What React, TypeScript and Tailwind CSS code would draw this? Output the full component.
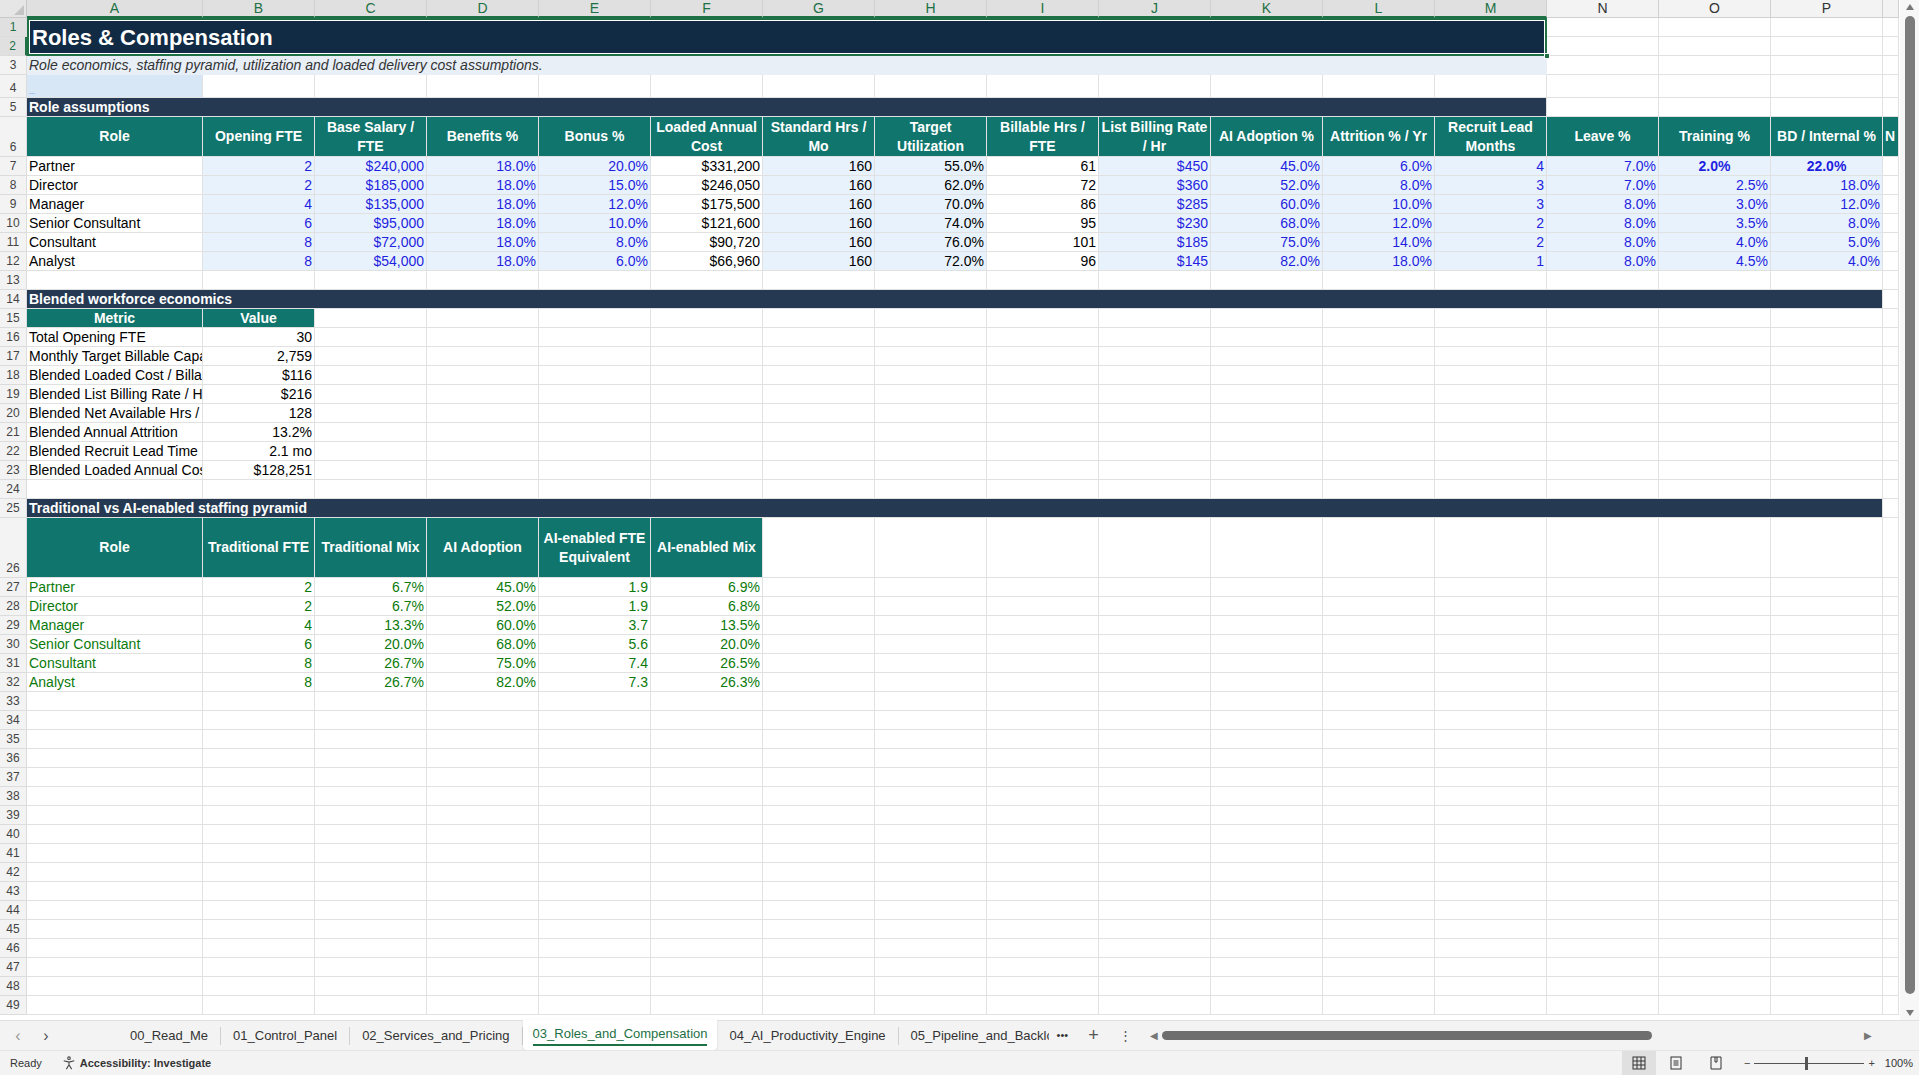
import React from "react";

const W = [176, 112, 112, 112, 112, 112, 112, 112, 112, 112, 112, 112, 112, 112, 112, 112, 16];
const LET = ["A","B","C","D","E","F","G","H","I","J","K","L","M","N","O","P",""];
const FONT = { fontFamily: '"Liberation Sans", Arial, sans-serif' };
const NARROW = { fontFamily: '"Liberation Sans", Arial, sans-serif' };

type C = { t?: React.ReactNode; cls?: string; span?: number };
const c = (t: React.ReactNode, cls = "", span = 1): C => ({ t, cls, span });

function Row({ n, h = 19, cells = [], green = false }: { n: number; h?: number; cells?: C[]; green?: boolean }) {
  const out: React.ReactNode[] = [];
  let col = 0;
  cells.forEach((cell, i) => {
    const span = cell.span || 1;
    let w = 0;
    for (let k = 0; k < span; k++) w += W[col + k];
    col += span;
    out.push(
      <div key={i} style={{ width: w }}
        className={`shrink-0 overflow-hidden whitespace-nowrap border-r border-b border-[#e1e1e1] px-[2px] flex items-end pb-[1px] text-[14px] leading-[16px] ${cell.cls}`}>
        {cell.t}
      </div>
    );
  });
  while (col < W.length) {
    out.push(<div key={"e" + col} style={{ width: W[col] }} className="shrink-0 border-r border-b border-[#e1e1e1]" />);
    col++;
  }
  return (
    <div className="flex" style={{ height: h }}>
      <div className={`w-[27px] shrink-0 bg-[#f3f3f3] border-r border-b border-[#dcdcdc] flex items-end justify-center text-[12px] leading-[17px] ${green ? "text-[#1e7145]" : "text-[#444]"}`}>{n}</div>
      {out}
    </div>
  );
}

const SECT = "bg-[#253a52] text-white font-bold text-[13px] border-[#253a52]";
const TEAL = "bg-[#10766d] text-white font-bold !justify-center text-center !whitespace-normal !items-center border-[#10766d] !leading-[19px] !pb-0";
const IN = "bg-[#e8f2fc] text-[#1f1fe0] justify-end";
const INB = "bg-[#e8f2fc] text-black justify-end";
const BLK = "justify-end text-black";
const GR = "text-[#0b7a0b]";
const GRR = "text-[#0b7a0b] justify-end";

const roles = [
  ["Partner", "2", "$240,000", "18.0%", "20.0%", "$331,200", "160", "55.0%", "61", "$450", "45.0%", "6.0%", "4", "7.0%", "2.0%", "22.0%"],
  ["Director", "2", "$185,000", "18.0%", "15.0%", "$246,050", "160", "62.0%", "72", "$360", "52.0%", "8.0%", "3", "7.0%", "2.5%", "18.0%"],
  ["Manager", "4", "$135,000", "18.0%", "12.0%", "$175,500", "160", "70.0%", "86", "$285", "60.0%", "10.0%", "3", "8.0%", "3.0%", "12.0%"],
  ["Senior Consultant", "6", "$95,000", "18.0%", "10.0%", "$121,600", "160", "74.0%", "95", "$230", "68.0%", "12.0%", "2", "8.0%", "3.5%", "8.0%"],
  ["Consultant", "8", "$72,000", "18.0%", "8.0%", "$90,720", "160", "76.0%", "101", "$185", "75.0%", "14.0%", "2", "8.0%", "4.0%", "5.0%"],
  ["Analyst", "8", "$54,000", "18.0%", "6.0%", "$66,960", "160", "72.0%", "96", "$145", "82.0%", "18.0%", "1", "8.0%", "4.5%", "4.0%"],
];
const blended = [
  ["Total Opening FTE", "30"], ["Monthly Target Billable Capacity", "2,759"], ["Blended Loaded Cost / Billable Hr", "$116"],
  ["Blended List Billing Rate / Hr", "$216"], ["Blended Net Available Hrs / FTE", "128"], ["Blended Annual Attrition", "13.2%"],
  ["Blended Recruit Lead Time", "2.1 mo"], ["Blended Loaded Annual Cost / FTE", "$128,251"],
];
const pyr = [
  ["Partner", "2", "6.7%", "45.0%", "1.9", "6.9%"], ["Director", "2", "6.7%", "52.0%", "1.9", "6.8%"],
  ["Manager", "4", "13.3%", "60.0%", "3.7", "13.5%"], ["Senior Consultant", "6", "20.0%", "68.0%", "5.6", "20.0%"],
  ["Consultant", "8", "26.7%", "75.0%", "7.4", "26.5%"], ["Analyst", "8", "26.7%", "82.0%", "7.3", "26.3%"],
];

export default function App() {
  const heads = ["Role", "Opening FTE", "Base Salary / FTE", "Benefits %", "Bonus %", "Loaded Annual Cost", "Standard Hrs / Mo", "Target Utilization", "Billable Hrs / FTE", "List Billing Rate / Hr", "AI Adoption %", "Attrition % / Yr", "Recruit Lead Months", "Leave %", "Training %", "BD / Internal %", "N"];
  const empty = Array.from({ length: 17 }, (_, i) => 33 + i);
  return (
    <div style={FONT} className="w-[1919px] h-[1075px] overflow-hidden bg-white flex flex-col">
      <div className="flex flex-1 min-h-0">
        <div className="flex-1 flex flex-col min-w-0 overflow-hidden">
          <div className="flex h-[18px] shrink-0">
            <div className="w-[27px] shrink-0 bg-[#e6e6e6] border-r border-b border-[#c8c8c8] relative">
              <div className="absolute right-[2px] bottom-[2px] w-0 h-0 border-l-[10px] border-l-transparent border-b-[10px] border-b-[#c4c4c4]" />
            </div>
            {W.map((w, i) => (
              <div key={i} style={{ width: w }} className={`shrink-0 flex items-center justify-center text-[14px] border-r border-[#d0d0d0] ${i < 13 ? "bg-[#e0e0e0] text-[#1e7145] border-b-2 border-b-[#1e7145]" : "bg-[#f3f3f3] text-[#333] border-b border-b-[#d0d0d0]"}`}>{LET[i]}</div>
            ))}
          </div>
          <div className="flex h-[38px] shrink-0">
            <div className="w-[27px] shrink-0 flex flex-col">
              <div className="h-[19px] bg-[#e0e0e0] border-r border-b border-[#dcdcdc] text-[#1e7145] text-[12px] flex items-end justify-center">1</div>
              <div className="h-[19px] bg-[#e0e0e0] border-r-2 border-r-[#1e7145] border-b border-[#dcdcdc] text-[#1e7145] text-[12px] flex items-end justify-center">2</div>
            </div>
            <div className="w-[1520px] shrink-0 bg-[#122b45] border-2 border-[#1e7145] outline outline-1 -outline-offset-3 outline-white text-white font-bold text-[22px] flex items-center px-[3px] relative">
              Roles &amp; Compensation
              <div className="absolute -right-[5px] -bottom-[5px] w-[6px] h-[6px] bg-[#1e7145] border border-white" />
            </div>
            <div className="flex flex-col">
              {[0, 1].map((r) => (
                <div key={r} className="flex h-[19px]">
                  {W.slice(13).map((w, i) => <div key={i} style={{ width: w }} className="shrink-0 border-r border-b border-[#e1e1e1]" />)}
                </div>
              ))}
            </div>
          </div>
          <Row n={3} cells={[c(<i>Role economics, staffing pyramid, utilization and loaded delivery cost assumptions.</i>, "bg-[#e8eff7] text-[12px] text-[#333] border-[#e8eff7]", 13)]} />
          <Row n={4} h={23} cells={[c(<span className="text-[7px] text-[#3a6fd8] leading-[8px]">...</span>, "bg-[#d7e7f5]")]} />
          <Row n={5} cells={[c("Role assumptions", SECT, 13)]} />
          <Row n={6} h={40} cells={heads.map((h, i) => c(h, TEAL + (i === 16 ? " !justify-start" : "")))} />
          {roles.map((r, ri) => (
            <Row key={ri} n={7 + ri} cells={r.map((v, i) => {
              if (i === 0) return c(v, "text-black");
              if (ri === 0 && (i === 14 || i === 15)) return c(v, "bg-[#e8f2fc] text-[#1f1fe0] font-bold justify-center");
              if (i === 5 || i === 8) return c(v, BLK);
              if (i === 6 || i === 7) return c(v, INB);
              return c(v, IN);
            })} />
          ))}
          <Row n={13} />
          <Row n={14} cells={[c("Blended workforce economics", SECT, 16)]} />
          <Row n={15} cells={[c("Metric", TEAL), c("Value", TEAL)]} />
          {blended.map((b, i) => <Row key={i} n={16 + i} cells={[c(b[0], "text-black"), c(b[1], BLK)]} />)}
          <Row n={24} />
          <Row n={25} cells={[c("Traditional vs AI-enabled staffing pyramid", SECT, 16)]} />
          <Row n={26} h={60} cells={["Role", "Traditional FTE", "Traditional Mix", "AI Adoption", "AI-enabled FTE Equivalent", "AI-enabled Mix"].map((h) => c(h, TEAL + " text-[13px]"))} />
          {pyr.map((r, ri) => <Row key={ri} n={27 + ri} cells={r.map((v, i) => c(v, i === 0 ? GR : GRR))} />)}
          {empty.map((n) => <Row key={n} n={n} />)}
        </div>
        <div className="w-[19px] shrink-0 bg-[#f7f7f7] flex flex-col items-center py-[4px] gap-[2px]">
          <div className="w-0 h-0 border-l-[4px] border-r-[4px] border-b-[6px] border-l-transparent border-r-transparent border-b-[#777]" />
          <div className="w-[10px] flex-1 bg-[#7b7b7b] rounded-full mt-[4px] mb-[14px]" />
          <div className="w-0 h-0 border-l-[4px] border-r-[4px] border-t-[6px] border-l-transparent border-r-transparent border-t-[#777]" />
        </div>
      </div>
      <div className="h-[30px] shrink-0 bg-[#f3f3f3] flex items-center text-[13px] text-[#333] border-t border-[#e0e0e0]">
        <span className="w-[36px] text-center text-[#999] text-[16px]">‹</span>
        <span className="w-[20px] text-center text-[#555] text-[16px]">›</span>
        <div className="w-[62px]" />
        {["00_Read_Me", "01_Control_Panel", "02_Services_and_Pricing"].map((t, i) => (
          <div key={i} className="px-[12px] border-r border-[#d0d0d0] h-[18px] flex items-center">{t}</div>
        ))}
        <div className="h-[30px] -mt-[2px] bg-white px-[10px] flex flex-col justify-center shadow-sm rounded-b">
          <span className="text-[#1e7145] border-b-2 border-[#1e7145] leading-[20px]">03_Roles_and_Compensation</span>
        </div>
        <div className="px-[12px] border-r border-[#d0d0d0] h-[18px] flex items-center">04_AI_Productivity_Engine</div>
        <div className="pl-[12px] w-[150px] overflow-hidden whitespace-nowrap">05_Pipeline_and_Backlog</div>
        <span className="ml-[8px] text-[11px]">•••</span>
        <span className="ml-[20px] text-[18px] text-[#555]">+</span>
        <span className="ml-[20px] text-[#555]">⋮</span>
        <div className="ml-[18px] flex items-center gap-[4px] w-[722px]">
          <span className="text-[#777] text-[10px]">◀</span>
          <div className="w-[490px] h-[9px] rounded-full bg-[#6e6e6e]" />
          <div className="flex-1" />
          <span className="text-[#777] text-[10px]">▶</span>
        </div>
      </div>
      <div className="h-[25px] shrink-0 bg-[#f3f3f3] border-t border-[#e6e6e6] flex items-center text-[11px] text-[#333]">
        <span className="ml-[10px]">Ready</span>
        <span className="ml-[20px] flex items-center gap-[4px]">
          <svg width="14" height="14" viewBox="0 0 16 16" fill="none" stroke="#444" strokeWidth="1.2"><circle cx="8" cy="2.5" r="1.5" /><path d="M2 5.5l6 1.5 6-1.5M8 7v3l-3 5M8 10l3 5" /></svg>
          <span className="font-bold">Accessibility: Investigate</span>
        </span>
        <div className="flex-1" />
        <div className="w-[34px] h-[25px] bg-[#e0e0e0] flex items-center justify-center">
          <svg width="14" height="14" viewBox="0 0 14 14" fill="none" stroke="#333"><rect x="1" y="1" width="12" height="12" /><path d="M5 1v12M9 1v12M1 5h12M1 9h12" /></svg>
        </div>
        <div className="w-[40px] flex justify-center">
          <svg width="12" height="14" viewBox="0 0 12 14" fill="none" stroke="#333"><rect x="1" y="1" width="10" height="12" /><path d="M3.5 5h5M3.5 7h5M3.5 9h5" /></svg>
        </div>
        <div className="w-[40px] flex justify-center">
          <svg width="12" height="14" viewBox="0 0 12 14" fill="none" stroke="#333"><path d="M1 1h10v12H1zM5 1v5h2V1" /></svg>
        </div>
        <span className="ml-[8px] text-[#444]">−</span>
        <div className="relative w-[110px] h-[1px] bg-[#555] mx-[4px]">
          <div className="absolute left-[51px] -top-[6px] w-[3px] h-[13px] bg-[#555]" />
        </div>
        <span className="text-[#444]">+</span>
        <span className="ml-[10px] mr-[6px]">100%</span>
      </div>
    </div>
  );
}
